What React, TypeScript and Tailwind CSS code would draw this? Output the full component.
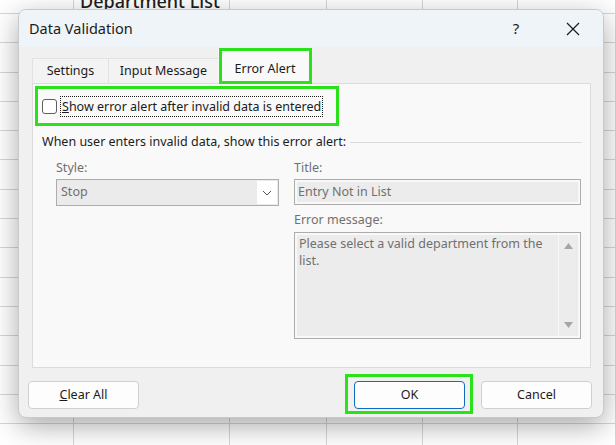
const font = { fontFamily: '"Noto Sans", "Open Sans", sans-serif' };

const colWidths = ["w-[74px]", "w-[156px]", "w-[97px]", "w-[96px]", "w-[95px]", "w-[98px]"];

const Sheet = () => {
  const rows = Array.from({ length: 16 }, (_, i) => i);
  return (
    <div className="grid grid-cols-[74px_156px_97px_96px_95px_98px] grid-rows-[14px_repeat(15,29.3px)]">
      {rows.map((r) =>
        colWidths.map((w, c) => (
          <div key={`${r}-${c}`} className="border-r border-b border-[#d6d6d6] bg-white" />
        ))
      )}
    </div>
  );
};

const Field = ({ children, className = "" }: { children?: React.ReactNode; className?: string }) => (
  <div
    className={`border border-[#adadad] bg-[#ececec] shadow-[inset_0_0_0_2px_#f8f8f8] text-[#707070] ${className}`}
  >
    {children}
  </div>
);

export default function App() {
  return (
    <div className="relative w-[616px] h-[445px] overflow-hidden bg-white" style={font}>
      <Sheet />
      <div className="absolute left-[80px] top-[-8px] text-[18px] leading-[18px] font-medium text-[#1e1e1e]">
        Department List
      </div>

      {/* dialog */}
      <div className="absolute left-[18px] top-[9px] w-[586px] h-[409px] rounded-[8px] border border-[#c9c9c9] bg-[#f0f0f0] overflow-hidden shadow-[0_8px_28px_rgba(0,0,0,0.34)] text-[12.5px] text-[#1b1b1b]">
        <div className="flex h-[37px] items-center bg-[#eef4f7] pl-[10px] pr-[7px]">
          <span className="text-[14.5px] text-[#1b1b1b]">Data Validation</span>
          <span className="ml-auto mr-[11px] flex w-[46px] justify-center text-[15px]">?</span>
          <span className="flex w-[46px] justify-center">
            <svg width="14" height="14" viewBox="0 0 14 14">
              <path d="M1 1L13 13M13 1L1 13" stroke="#1b1b1b" strokeWidth="1.2" />
            </svg>
          </span>
        </div>

        <div className="pl-[13px] pr-[12px]">
          {/* tabs */}
          <div className="flex h-[36px] items-end">
            <div className="flex h-[25px] w-[76px] items-center justify-center border-t border-l border-[#e2e2e2] bg-[#f3f3f3] pt-[1px]">
              Settings
            </div>
            <div className="flex h-[25px] w-[110px] items-center justify-center border-t border-l border-[#e2e2e2] bg-[#f3f3f3] pt-[1px]">
              Input Message
            </div>
            <div className="relative flex h-[34px] w-[94px] items-center justify-center bg-[#f9f9f9] pt-[7px]">
              Error Alert
              <div className="absolute left-[1px] right-[0px] top-[-1px] bottom-[-1px] border-[3px] border-[#2be21a]" />
            </div>
          </div>

          {/* panel */}
          <div className="h-[285px] border border-[#dcdcdc] bg-[#f9f9f9]">
            <div className="ml-[2px] mt-[2px] flex h-[40px] w-[304px] items-center border-[3px] border-[#2be21a] pl-[4px]">
              <div className="h-[15px] w-[15px] rounded-[3px] border border-[#5f5f5f] bg-white" />
              <span className="ml-[3px] border border-dotted border-[#1b1b1b] px-[1px] leading-[19px]">
                <u>S</u>how error alert after invalid data is entered
              </span>
            </div>

            <div className="mr-[8px] ml-[9px] mt-[7px] flex h-[18px] items-center gap-[4px]">
              <span className="whitespace-nowrap">When user enters invalid data, show this error alert:</span>
              <div className="h-px flex-1 bg-[#dcdcdc]" />
            </div>

            <div className="mt-[8px] ml-[23px] flex gap-[15px]">
              <div className="w-[223px]">
                <div className="h-[18px] leading-[18px] text-[#707070]">Style:</div>
                <div className="mt-[2px] flex h-[27px] items-center border border-[#adadad] bg-[#ebebeb] pl-[4px] text-[#707070]">
                  <span>Stop</span>
                  <div className="ml-auto mr-[1px] flex h-[23px] w-[20px] items-center justify-center bg-white">
                    <svg width="10" height="6" viewBox="0 0 10 6">
                      <path d="M1 1L5 5L9 1" fill="none" stroke="#555" strokeWidth="1" />
                    </svg>
                  </div>
                </div>
              </div>

              <div className="w-[287px]">
                <div className="h-[18px] leading-[18px] text-[#707070]">Title:</div>
                <Field className="mt-[2px] flex h-[26px] items-center pl-[3px]">Entry Not in List</Field>
                <div className="mt-[6px] h-[18px] leading-[18px] text-[#707070]">Error message:</div>
                <Field className="mt-[3px] flex h-[107px]">
                  <div className="flex-1 pl-[4px] pt-[2px] leading-[17px]">
                    Please select a valid department from the list.
                  </div>
                  <div className="my-[2px] mr-[2px] flex w-[20px] flex-col items-center justify-between py-[8px] border-l border-[#f7f7f7]">
                    <svg width="9" height="6" viewBox="0 0 9 6">
                      <path d="M0 6L4.5 0L9 6Z" fill="#a6a6a6" />
                    </svg>
                    <svg width="9" height="6" viewBox="0 0 9 6">
                      <path d="M0 0L4.5 6L9 0Z" fill="#a6a6a6" />
                    </svg>
                  </div>
                </Field>
              </div>
            </div>
          </div>
        </div>

        {/* buttons */}
        <div className="mt-[13px] flex pl-[9px] pr-[11px]">
          <button className="h-[28px] w-[111px] rounded-[4px] border border-[#d0d0d0] bg-[#fdfdfd]">
            <u>C</u>lear All
          </button>
          <button className="relative ml-auto h-[28px] w-[111px] rounded-[4px] border border-[#0f6cbd] bg-[#fdfdfd]">
            OK
            <div className="absolute left-[-10px] right-[-9px] top-[-8px] bottom-[-6px] border-[3px] border-[#2be21a]" />
          </button>
          <button className="ml-[16px] h-[28px] w-[111px] rounded-[4px] border border-[#d0d0d0] bg-[#fdfdfd]">
            Cancel
          </button>
        </div>
      </div>
    </div>
  );
}
